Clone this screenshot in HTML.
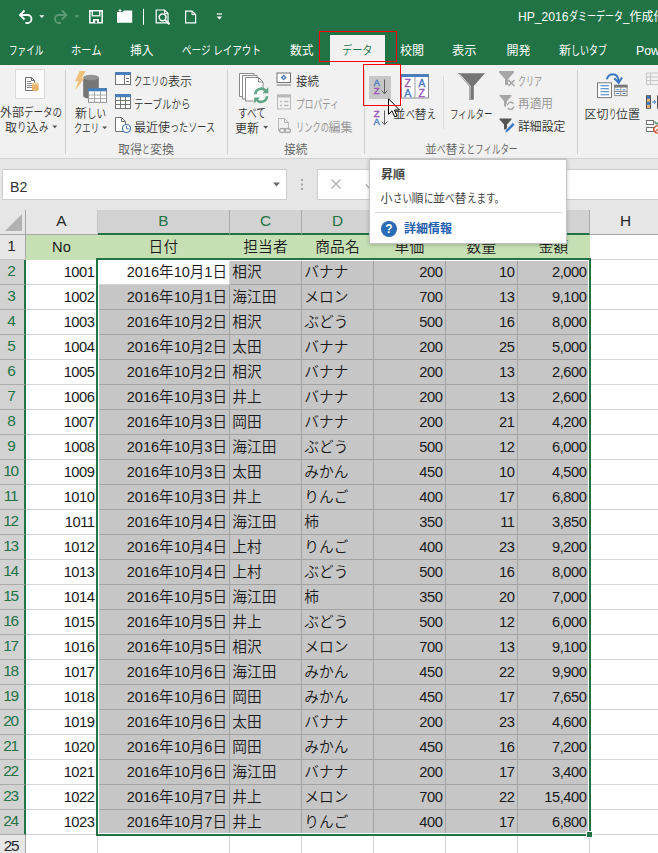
<!DOCTYPE html>
<html lang="ja"><head><meta charset="utf-8"><title>Excel</title>
<style>
*{box-sizing:border-box;margin:0;padding:0}
html,body{width:658px;height:853px;overflow:hidden;background:#fff}
body{position:relative;font-family:"Liberation Sans","Noto Sans CJK JP",sans-serif;font-size:12px;color:#262626}
.abs{position:absolute}
#top{position:absolute;left:0;top:0;width:658px;height:65px;background:#217346}
#ribbon{position:absolute;left:0;top:65px;width:658px;height:94px;background:#f1f1f1;border-bottom:1px solid #d2d2d2}
#fbar{position:absolute;left:0;top:159px;width:658px;height:51px;background:#e6e6e6}
.t{position:absolute;white-space:nowrap;line-height:16px;height:16px;transform-origin:0 50%}
.tw{color:#fff}
.g{color:#606060;font-weight:350}
.d{color:#979797}
.rb{color:#333;font-weight:350}
.vs{position:absolute;width:1px;background:#d0d0d0}
/* sheet */
#sheet{position:absolute;left:0;top:0;width:658px;height:853px;font-size:14.7px;font-weight:350}
.corner{position:absolute;left:0;top:210px;width:26px;height:25px;background:#e6e6e6;border-right:1px solid #a6a6a6;border-bottom:1px solid #a6a6a6}
.corner:after{content:"";position:absolute;right:3px;bottom:3px;border-style:solid;border-width:0 0 17px 17px;border-color:transparent transparent #b2b2b2 transparent}
.ch{position:absolute;top:210px;height:25px;background:#e6e6e6;border-right:1px solid #c6c6c6;border-bottom:1px solid #a6a6a6;text-align:center;line-height:22px;color:#262626;font-size:15.4px}
.ch.sel{background:#d2d2d2;color:#217346;border-right-color:#ababab;border-bottom:2px solid #217346}
.rh{position:absolute;left:0;width:26px;height:25px;background:#e6e6e6;border-right:1px solid #a6a6a6;border-bottom:1px solid #c6c6c6;text-align:center;line-height:22px;color:#262626;font-size:15.4px;padding-right:2px}
.rh.sel{background:#d2d2d2;color:#217346;border-bottom-color:#ababab;border-right:2px solid #217346;padding-right:1px}
.rh.n2{letter-spacing:-1.2px;padding-right:3px}
.c{position:absolute;height:25px;border-right:1px solid #d4d4d4;border-bottom:1px solid #d4d4d4;line-height:24px;white-space:nowrap;overflow:hidden;color:#1a1a1a;background:#fff}
.c.h1{background:#c6e0b4;border-color:#c6e0b4;text-align:center;letter-spacing:.2px}
.c.s{background:#c6c6c6;border-color:#a3a3a3}
.c.r{text-align:right;padding-right:2.5px}
.c.dt{font-size:14.55px;padding-right:2px}
.c.n{letter-spacing:-.45px}
.c.l{text-align:left;padding-left:2.3px}
</style></head><body>
<style>
.grn{color:#217346;font-weight:350}.tt{color:#444}.lnk{color:#1e5fb0}
</style><div id="sheet">
<div class="corner"></div>
<div class="ch" style="left:26px;width:72px">A</div>
<div class="ch sel" style="left:98px;width:132px">B</div>
<div class="ch sel" style="left:230px;width:72px">C</div>
<div class="ch sel" style="left:302px;width:72px">D</div>
<div class="ch sel" style="left:374px;width:72px">E</div>
<div class="ch sel" style="left:446px;width:72px">F</div>
<div class="ch sel" style="left:518px;width:72px">G</div>
<div class="ch" style="left:590px;width:72px">H</div>
<div class="rh" style="top:235px">1</div>
<div class="rh sel" style="top:260px">2</div>
<div class="rh sel" style="top:285px">3</div>
<div class="rh sel" style="top:310px">4</div>
<div class="rh sel" style="top:335px">5</div>
<div class="rh sel" style="top:360px">6</div>
<div class="rh sel" style="top:385px">7</div>
<div class="rh sel" style="top:410px">8</div>
<div class="rh sel" style="top:435px">9</div>
<div class="rh sel n2" style="top:460px">10</div>
<div class="rh sel n2" style="top:485px">11</div>
<div class="rh sel n2" style="top:510px">12</div>
<div class="rh sel n2" style="top:535px">13</div>
<div class="rh sel n2" style="top:560px">14</div>
<div class="rh sel n2" style="top:585px">15</div>
<div class="rh sel n2" style="top:610px">16</div>
<div class="rh sel n2" style="top:635px">17</div>
<div class="rh sel n2" style="top:660px">18</div>
<div class="rh sel n2" style="top:685px">19</div>
<div class="rh sel n2" style="top:710px">20</div>
<div class="rh sel n2" style="top:735px">21</div>
<div class="rh sel n2" style="top:760px">22</div>
<div class="rh sel n2" style="top:785px">23</div>
<div class="rh sel n2" style="top:810px">24</div>
<div class="rh n2" style="top:835px">25</div>
<div class="c h1" style="left:26px;top:235px;width:72px">No</div>
<div class="c h1" style="left:98px;top:235px;width:132px">日付</div>
<div class="c h1" style="left:230px;top:235px;width:72px">担当者</div>
<div class="c h1" style="left:302px;top:235px;width:72px">商品名</div>
<div class="c h1" style="left:374px;top:235px;width:72px">単価</div>
<div class="c h1" style="left:446px;top:235px;width:72px">数量</div>
<div class="c h1" style="left:518px;top:235px;width:72px">金額</div>
<div class="c" style="left:590px;top:235px;width:72px"></div>
<div class="c r n" style="left:26px;top:260px;width:72px">1001</div>
<div class="c r dt" style="left:98px;top:260px;width:132px">2016年10月1日</div>
<div class="c s l" style="left:230px;top:260px;width:72px">相沢</div>
<div class="c s l" style="left:302px;top:260px;width:72px">バナナ</div>
<div class="c s r n" style="left:374px;top:260px;width:72px">200</div>
<div class="c s r n" style="left:446px;top:260px;width:72px">10</div>
<div class="c s r n" style="left:518px;top:260px;width:72px">2,000</div>
<div class="c" style="left:590px;top:260px;width:72px"></div>
<div class="c r n" style="left:26px;top:285px;width:72px">1002</div>
<div class="c s r dt" style="left:98px;top:285px;width:132px">2016年10月1日</div>
<div class="c s l" style="left:230px;top:285px;width:72px">海江田</div>
<div class="c s l" style="left:302px;top:285px;width:72px">メロン</div>
<div class="c s r n" style="left:374px;top:285px;width:72px">700</div>
<div class="c s r n" style="left:446px;top:285px;width:72px">13</div>
<div class="c s r n" style="left:518px;top:285px;width:72px">9,100</div>
<div class="c" style="left:590px;top:285px;width:72px"></div>
<div class="c r n" style="left:26px;top:310px;width:72px">1003</div>
<div class="c s r dt" style="left:98px;top:310px;width:132px">2016年10月2日</div>
<div class="c s l" style="left:230px;top:310px;width:72px">相沢</div>
<div class="c s l" style="left:302px;top:310px;width:72px">ぶどう</div>
<div class="c s r n" style="left:374px;top:310px;width:72px">500</div>
<div class="c s r n" style="left:446px;top:310px;width:72px">16</div>
<div class="c s r n" style="left:518px;top:310px;width:72px">8,000</div>
<div class="c" style="left:590px;top:310px;width:72px"></div>
<div class="c r n" style="left:26px;top:335px;width:72px">1004</div>
<div class="c s r dt" style="left:98px;top:335px;width:132px">2016年10月2日</div>
<div class="c s l" style="left:230px;top:335px;width:72px">太田</div>
<div class="c s l" style="left:302px;top:335px;width:72px">バナナ</div>
<div class="c s r n" style="left:374px;top:335px;width:72px">200</div>
<div class="c s r n" style="left:446px;top:335px;width:72px">25</div>
<div class="c s r n" style="left:518px;top:335px;width:72px">5,000</div>
<div class="c" style="left:590px;top:335px;width:72px"></div>
<div class="c r n" style="left:26px;top:360px;width:72px">1005</div>
<div class="c s r dt" style="left:98px;top:360px;width:132px">2016年10月2日</div>
<div class="c s l" style="left:230px;top:360px;width:72px">相沢</div>
<div class="c s l" style="left:302px;top:360px;width:72px">バナナ</div>
<div class="c s r n" style="left:374px;top:360px;width:72px">200</div>
<div class="c s r n" style="left:446px;top:360px;width:72px">13</div>
<div class="c s r n" style="left:518px;top:360px;width:72px">2,600</div>
<div class="c" style="left:590px;top:360px;width:72px"></div>
<div class="c r n" style="left:26px;top:385px;width:72px">1006</div>
<div class="c s r dt" style="left:98px;top:385px;width:132px">2016年10月3日</div>
<div class="c s l" style="left:230px;top:385px;width:72px">井上</div>
<div class="c s l" style="left:302px;top:385px;width:72px">バナナ</div>
<div class="c s r n" style="left:374px;top:385px;width:72px">200</div>
<div class="c s r n" style="left:446px;top:385px;width:72px">13</div>
<div class="c s r n" style="left:518px;top:385px;width:72px">2,600</div>
<div class="c" style="left:590px;top:385px;width:72px"></div>
<div class="c r n" style="left:26px;top:410px;width:72px">1007</div>
<div class="c s r dt" style="left:98px;top:410px;width:132px">2016年10月3日</div>
<div class="c s l" style="left:230px;top:410px;width:72px">岡田</div>
<div class="c s l" style="left:302px;top:410px;width:72px">バナナ</div>
<div class="c s r n" style="left:374px;top:410px;width:72px">200</div>
<div class="c s r n" style="left:446px;top:410px;width:72px">21</div>
<div class="c s r n" style="left:518px;top:410px;width:72px">4,200</div>
<div class="c" style="left:590px;top:410px;width:72px"></div>
<div class="c r n" style="left:26px;top:435px;width:72px">1008</div>
<div class="c s r dt" style="left:98px;top:435px;width:132px">2016年10月3日</div>
<div class="c s l" style="left:230px;top:435px;width:72px">海江田</div>
<div class="c s l" style="left:302px;top:435px;width:72px">ぶどう</div>
<div class="c s r n" style="left:374px;top:435px;width:72px">500</div>
<div class="c s r n" style="left:446px;top:435px;width:72px">12</div>
<div class="c s r n" style="left:518px;top:435px;width:72px">6,000</div>
<div class="c" style="left:590px;top:435px;width:72px"></div>
<div class="c r n" style="left:26px;top:460px;width:72px">1009</div>
<div class="c s r dt" style="left:98px;top:460px;width:132px">2016年10月3日</div>
<div class="c s l" style="left:230px;top:460px;width:72px">太田</div>
<div class="c s l" style="left:302px;top:460px;width:72px">みかん</div>
<div class="c s r n" style="left:374px;top:460px;width:72px">450</div>
<div class="c s r n" style="left:446px;top:460px;width:72px">10</div>
<div class="c s r n" style="left:518px;top:460px;width:72px">4,500</div>
<div class="c" style="left:590px;top:460px;width:72px"></div>
<div class="c r n" style="left:26px;top:485px;width:72px">1010</div>
<div class="c s r dt" style="left:98px;top:485px;width:132px">2016年10月3日</div>
<div class="c s l" style="left:230px;top:485px;width:72px">井上</div>
<div class="c s l" style="left:302px;top:485px;width:72px">りんご</div>
<div class="c s r n" style="left:374px;top:485px;width:72px">400</div>
<div class="c s r n" style="left:446px;top:485px;width:72px">17</div>
<div class="c s r n" style="left:518px;top:485px;width:72px">6,800</div>
<div class="c" style="left:590px;top:485px;width:72px"></div>
<div class="c r n" style="left:26px;top:510px;width:72px">1011</div>
<div class="c s r dt" style="left:98px;top:510px;width:132px">2016年10月4日</div>
<div class="c s l" style="left:230px;top:510px;width:72px">海江田</div>
<div class="c s l" style="left:302px;top:510px;width:72px">柿</div>
<div class="c s r n" style="left:374px;top:510px;width:72px">350</div>
<div class="c s r n" style="left:446px;top:510px;width:72px">11</div>
<div class="c s r n" style="left:518px;top:510px;width:72px">3,850</div>
<div class="c" style="left:590px;top:510px;width:72px"></div>
<div class="c r n" style="left:26px;top:535px;width:72px">1012</div>
<div class="c s r dt" style="left:98px;top:535px;width:132px">2016年10月4日</div>
<div class="c s l" style="left:230px;top:535px;width:72px">上村</div>
<div class="c s l" style="left:302px;top:535px;width:72px">りんご</div>
<div class="c s r n" style="left:374px;top:535px;width:72px">400</div>
<div class="c s r n" style="left:446px;top:535px;width:72px">23</div>
<div class="c s r n" style="left:518px;top:535px;width:72px">9,200</div>
<div class="c" style="left:590px;top:535px;width:72px"></div>
<div class="c r n" style="left:26px;top:560px;width:72px">1013</div>
<div class="c s r dt" style="left:98px;top:560px;width:132px">2016年10月4日</div>
<div class="c s l" style="left:230px;top:560px;width:72px">上村</div>
<div class="c s l" style="left:302px;top:560px;width:72px">ぶどう</div>
<div class="c s r n" style="left:374px;top:560px;width:72px">500</div>
<div class="c s r n" style="left:446px;top:560px;width:72px">16</div>
<div class="c s r n" style="left:518px;top:560px;width:72px">8,000</div>
<div class="c" style="left:590px;top:560px;width:72px"></div>
<div class="c r n" style="left:26px;top:585px;width:72px">1014</div>
<div class="c s r dt" style="left:98px;top:585px;width:132px">2016年10月5日</div>
<div class="c s l" style="left:230px;top:585px;width:72px">海江田</div>
<div class="c s l" style="left:302px;top:585px;width:72px">柿</div>
<div class="c s r n" style="left:374px;top:585px;width:72px">350</div>
<div class="c s r n" style="left:446px;top:585px;width:72px">20</div>
<div class="c s r n" style="left:518px;top:585px;width:72px">7,000</div>
<div class="c" style="left:590px;top:585px;width:72px"></div>
<div class="c r n" style="left:26px;top:610px;width:72px">1015</div>
<div class="c s r dt" style="left:98px;top:610px;width:132px">2016年10月5日</div>
<div class="c s l" style="left:230px;top:610px;width:72px">井上</div>
<div class="c s l" style="left:302px;top:610px;width:72px">ぶどう</div>
<div class="c s r n" style="left:374px;top:610px;width:72px">500</div>
<div class="c s r n" style="left:446px;top:610px;width:72px">12</div>
<div class="c s r n" style="left:518px;top:610px;width:72px">6,000</div>
<div class="c" style="left:590px;top:610px;width:72px"></div>
<div class="c r n" style="left:26px;top:635px;width:72px">1016</div>
<div class="c s r dt" style="left:98px;top:635px;width:132px">2016年10月5日</div>
<div class="c s l" style="left:230px;top:635px;width:72px">相沢</div>
<div class="c s l" style="left:302px;top:635px;width:72px">メロン</div>
<div class="c s r n" style="left:374px;top:635px;width:72px">700</div>
<div class="c s r n" style="left:446px;top:635px;width:72px">13</div>
<div class="c s r n" style="left:518px;top:635px;width:72px">9,100</div>
<div class="c" style="left:590px;top:635px;width:72px"></div>
<div class="c r n" style="left:26px;top:660px;width:72px">1017</div>
<div class="c s r dt" style="left:98px;top:660px;width:132px">2016年10月6日</div>
<div class="c s l" style="left:230px;top:660px;width:72px">海江田</div>
<div class="c s l" style="left:302px;top:660px;width:72px">みかん</div>
<div class="c s r n" style="left:374px;top:660px;width:72px">450</div>
<div class="c s r n" style="left:446px;top:660px;width:72px">22</div>
<div class="c s r n" style="left:518px;top:660px;width:72px">9,900</div>
<div class="c" style="left:590px;top:660px;width:72px"></div>
<div class="c r n" style="left:26px;top:685px;width:72px">1018</div>
<div class="c s r dt" style="left:98px;top:685px;width:132px">2016年10月6日</div>
<div class="c s l" style="left:230px;top:685px;width:72px">岡田</div>
<div class="c s l" style="left:302px;top:685px;width:72px">みかん</div>
<div class="c s r n" style="left:374px;top:685px;width:72px">450</div>
<div class="c s r n" style="left:446px;top:685px;width:72px">17</div>
<div class="c s r n" style="left:518px;top:685px;width:72px">7,650</div>
<div class="c" style="left:590px;top:685px;width:72px"></div>
<div class="c r n" style="left:26px;top:710px;width:72px">1019</div>
<div class="c s r dt" style="left:98px;top:710px;width:132px">2016年10月6日</div>
<div class="c s l" style="left:230px;top:710px;width:72px">太田</div>
<div class="c s l" style="left:302px;top:710px;width:72px">バナナ</div>
<div class="c s r n" style="left:374px;top:710px;width:72px">200</div>
<div class="c s r n" style="left:446px;top:710px;width:72px">23</div>
<div class="c s r n" style="left:518px;top:710px;width:72px">4,600</div>
<div class="c" style="left:590px;top:710px;width:72px"></div>
<div class="c r n" style="left:26px;top:735px;width:72px">1020</div>
<div class="c s r dt" style="left:98px;top:735px;width:132px">2016年10月6日</div>
<div class="c s l" style="left:230px;top:735px;width:72px">岡田</div>
<div class="c s l" style="left:302px;top:735px;width:72px">みかん</div>
<div class="c s r n" style="left:374px;top:735px;width:72px">450</div>
<div class="c s r n" style="left:446px;top:735px;width:72px">16</div>
<div class="c s r n" style="left:518px;top:735px;width:72px">7,200</div>
<div class="c" style="left:590px;top:735px;width:72px"></div>
<div class="c r n" style="left:26px;top:760px;width:72px">1021</div>
<div class="c s r dt" style="left:98px;top:760px;width:132px">2016年10月6日</div>
<div class="c s l" style="left:230px;top:760px;width:72px">海江田</div>
<div class="c s l" style="left:302px;top:760px;width:72px">バナナ</div>
<div class="c s r n" style="left:374px;top:760px;width:72px">200</div>
<div class="c s r n" style="left:446px;top:760px;width:72px">17</div>
<div class="c s r n" style="left:518px;top:760px;width:72px">3,400</div>
<div class="c" style="left:590px;top:760px;width:72px"></div>
<div class="c r n" style="left:26px;top:785px;width:72px">1022</div>
<div class="c s r dt" style="left:98px;top:785px;width:132px">2016年10月7日</div>
<div class="c s l" style="left:230px;top:785px;width:72px">井上</div>
<div class="c s l" style="left:302px;top:785px;width:72px">メロン</div>
<div class="c s r n" style="left:374px;top:785px;width:72px">700</div>
<div class="c s r n" style="left:446px;top:785px;width:72px">22</div>
<div class="c s r n" style="left:518px;top:785px;width:72px">15,400</div>
<div class="c" style="left:590px;top:785px;width:72px"></div>
<div class="c r n" style="left:26px;top:810px;width:72px">1023</div>
<div class="c s r dt" style="left:98px;top:810px;width:132px">2016年10月7日</div>
<div class="c s l" style="left:230px;top:810px;width:72px">井上</div>
<div class="c s l" style="left:302px;top:810px;width:72px">りんご</div>
<div class="c s r n" style="left:374px;top:810px;width:72px">400</div>
<div class="c s r n" style="left:446px;top:810px;width:72px">17</div>
<div class="c s r n" style="left:518px;top:810px;width:72px">6,800</div>
<div class="c" style="left:590px;top:810px;width:72px"></div>
<div class="c" style="left:26px;top:835px;width:72px"></div>
<div class="c" style="left:98px;top:835px;width:132px"></div>
<div class="c" style="left:230px;top:835px;width:72px"></div>
<div class="c" style="left:302px;top:835px;width:72px"></div>
<div class="c" style="left:374px;top:835px;width:72px"></div>
<div class="c" style="left:446px;top:835px;width:72px"></div>
<div class="c" style="left:518px;top:835px;width:72px"></div>
<div class="c" style="left:590px;top:835px;width:72px"></div>
</div>
<div id="top"></div>
<div id="ribbon"></div>
<div id="fbar"></div>
<!-- active tab -->
<div class="abs" style="left:330px;top:35px;width:55px;height:31px;background:#f1f1f1"></div>

<!-- title bar icons -->
<svg class="abs" style="left:0;top:0" width="240" height="34" viewBox="0 0 240 34" fill="none">
 <!-- undo -->
 <path d="M24.5 10.5 L20 15 L24.5 19.5" stroke="#fff" stroke-width="1.8" fill="none"/>
 <path d="M20.5 15 H27.5 A4 4 0 0 1 27.5 23 H25.5" stroke="#fff" stroke-width="1.8" fill="none"/>
 <path d="M39.3 15.3 h5 l-2.5 2.6z" fill="#fff"/>
 <!-- redo faded -->
 <path d="M62 10.5 L66.5 15 L62 19.5" stroke="#5c9a78" stroke-width="1.8" fill="none"/>
 <path d="M66 15 H59 A4 4 0 0 0 59 23 H61" stroke="#5c9a78" stroke-width="1.8" fill="none"/>
 <path d="M74.3 15.3 h5 l-2.5 2.6z" fill="#5c9a78"/>
 <!-- save -->
 <path d="M89.8 10.8 H102.2 V22.7 H89.8 Z" stroke="#fff" stroke-width="1.6"/>
 <rect x="92.3" y="10.8" width="7.4" height="5" fill="#217346" stroke="#fff" stroke-width="1.3"/>
 <rect x="93" y="19" width="6" height="4" fill="#fff"/>
 <rect x="95.2" y="20.5" width="1.8" height="2.5" fill="#217346"/>
 <!-- folder -->
 <path d="M117 12 h5.5 l1.5 -1.6 h8.2 V22.8 H117 Z" fill="#fff"/>
 <path d="M118.5 10.6 h3 M120 9 v3" stroke="#fff" stroke-width="1"/>
 <!-- sep -->
 <rect x="143" y="8.8" width="1" height="16" fill="#fff"/>
 <!-- print preview -->
 <path d="M156.2 10 H164.5 L168 13.5 V22.8 H156.2 Z" stroke="#fff" stroke-width="1.2"/>
 <path d="M164.5 10 V13.5 H168" stroke="#fff" stroke-width="1"/>
 <circle cx="162.6" cy="17.3" r="3.4" stroke="#fff" stroke-width="1.5" fill="#217346"/>
 <path d="M165 20 L169.5 24.3" stroke="#fff" stroke-width="2"/>
 <!-- new doc -->
 <path d="M185.6 11.2 H192 L195.6 14.6 V22.9 H185.6 Z" stroke="#fff" stroke-width="1.2"/>
 <path d="M192 11.2 V14.6 H195.6" stroke="#fff" stroke-width="1"/>
 <!-- customize -->
 <rect x="216.8" y="13.4" width="5.2" height="1.2" fill="#fff"/>
 <path d="M216.6 16.4 h5.6 l-2.8 3.2z" fill="#fff"/>
</svg>

<!-- ribbon separators -->
<div class="vs" style="left:65px;top:70px;height:84px"></div>
<div class="vs" style="left:227px;top:70px;height:84px"></div>
<div class="vs" style="left:364px;top:70px;height:84px"></div>
<div class="vs" style="left:443px;top:76px;height:53px;background:#dcdcdc"></div>
<div class="vs" style="left:577px;top:70px;height:84px"></div>

<!-- external data big button -->
<div class="abs" style="left:15px;top:69px;width:30px;height:30px;background:#fbfbfb;border:1px solid #dadada"></div>
<svg class="abs" style="left:15px;top:69px" width="30" height="30" viewBox="0 0 30 30" fill="none">
 <path d="M10.5 8.5 H16.5 L19.5 11.5 V21.5 H10.5 Z" fill="#fff" stroke="#6e6e6e" stroke-width="1"/>
 <path d="M16.5 8.5 V11.5 H19.5" stroke="#6e6e6e" stroke-width="1"/>
 <path d="M12 12.5h4M12 14.5h5M12 16.5h5M12 18.5h5" stroke="#8a8a8a" stroke-width="1"/>
 <path d="M17 14.8 v6 a3.3 1.4 0 0 0 6.6 0 v-6 z" fill="#e8b36a"/>
 <ellipse cx="20.3" cy="14.8" rx="3.3" ry="1.4" fill="#f3cf98"/>
</svg>
<!-- dropdown arrows -->
<svg class="abs" style="left:0;top:64px" width="658" height="94" viewBox="0 64 658 94">
 <path d="M52.300 125.400 h5 l-2.500 2.800z" fill="#555"/>
 <path d="M102.200 126.500 h5 l-2.500 2.800z" fill="#555"/>
 <path d="M263.200 126 h5 l-2.500 2.800z" fill="#555"/>
</svg>

<!-- new query icon -->
<svg class="abs" style="left:74px;top:69px" width="36" height="36" viewBox="74 69 36 36" fill="none">
 <path d="M83.200 77.500 v18.500 a7.800 2.800 0 0 0 15.600 0 v-18.500 z" fill="#757575"/>
 <ellipse cx="91" cy="77.500" rx="7.800" ry="2.800" fill="#949494"/>
 <path d="M79.600 71 h6 l-3.800 7.300 h2.600 l-8.900 11.600 l2.700 -8.600 h-3.100 z" fill="#efc079"/>
 <rect x="88.500" y="88.500" width="18" height="13.800" fill="#fff" stroke="#8f8f8f" stroke-width="1"/>
 <rect x="88" y="88" width="19" height="3.300" fill="#4a7ebb"/>
 <path d="M88.500 95 h18 M88.500 98.600 h18 M94.500 91.500 v10.500 M100.500 91.500 v10.500" stroke="#a0a0a0" stroke-width=".9"/>
</svg>

<!-- small icons group1 -->
<svg class="abs" style="left:114px;top:70px" width="20" height="66" viewBox="114 70 20 66" fill="none">
 <!-- show queries -->
 <rect x="115.5" y="72.5" width="15" height="12" fill="#fff" stroke="#737373"/>
 <rect x="115" y="72" width="16" height="3" fill="#4a7ebb"/>
 <path d="M124.5 75 v9.5" stroke="#737373"/>
 <path d="M126 78.5h3M126 81.5h3" stroke="#737373"/>
 <!-- from table -->
 <rect x="115.5" y="94.5" width="15" height="14" fill="#fff" stroke="#737373"/>
 <rect x="115" y="94" width="16" height="3.2" fill="#4a7ebb"/>
 <path d="M115.5 100.5h15M115.5 104.5h15M120.5 97v11.5M125.5 97v11.5" stroke="#737373"/>
 <!-- recent sources -->
 <path d="M115.5 117.5 H121.5 L125.5 121.5 V131.5 H115.5 Z" fill="#fff" stroke="#737373"/>
 <path d="M121.5 117.5 V121.5 H125.5" stroke="#737373"/>
 <circle cx="126.5" cy="128.5" r="4" fill="#fff" stroke="#3f73b7" stroke-width="1.2"/>
 <path d="M126.5 126 v2.8 h2.3" stroke="#3f73b7" stroke-width="1"/>
</svg>

<!-- refresh all icon -->
<svg class="abs" style="left:236px;top:70px" width="36" height="36" viewBox="236 70 36 36" fill="none">
 <path d="M239.500 73.500 h14.500 v23 h-14.500z" fill="#fff" stroke="#8a8a8a"/>
 <path d="M242.500 75.500 h14.500 v23.500 h-14.500z" fill="#fff" stroke="#8a8a8a"/>
 <path d="M245.500 77.500 H258.500 L263 82 V101 H245.500 Z" fill="#fff"/>
 <path d="M253.500 101 H245.500 V77.500 H258.500 L263 82 V88" stroke="#8a8a8a"/>
 <path d="M258.500 77.500 V82 H263" stroke="#8a8a8a"/>
 <path d="M255.400 94.300 a5.800 5.800 0 0 1 10.300 -3.400" stroke="#62a688" stroke-width="2.600"/>
 <path d="M268.300 87.200 v6 h-6z" fill="#62a688"/>
 <path d="M267 96.300 a5.800 5.800 0 0 1 -10.300 3.400" stroke="#62a688" stroke-width="2.600"/>
 <path d="M254.100 103.400 v-6 h6z" fill="#62a688"/>
</svg>

<!-- small icons group2 -->
<svg class="abs" style="left:275px;top:70px" width="20" height="66" viewBox="275 70 20 66" fill="none">
 <!-- connections -->
 <rect x="277" y="73" width="13.500" height="9.500" fill="#fff" stroke="#737373"/>
 <path d="M276.500 85 h14.500" stroke="#737373"/>
 <path d="M283.700 74.600 l3 3 l-3 3 l-3 -3z" fill="#4a7ebb"/>
 <rect x="282.900" y="76.800" width="1.600" height="1.600" fill="#fff"/>
 <!-- properties -->
 <rect x="277.500" y="95" width="13" height="14" fill="#f1f1f1" stroke="#b9b9b9"/>
 <rect x="277" y="94.500" width="14" height="3" fill="#b9b9b9"/>
 <path d="M280 101.500h2M284 101.500h4.500M280 105.500h2M284 105.500h4.500" stroke="#b9b9b9" stroke-width="1.300"/>
 <!-- edit links -->
 <path d="M278.500 118.500 H284.500 L288.500 122.500 V128 M278.500 118.500 V131" stroke="#b9b9b9"/>
 <path d="M284.500 118.500 V122.500 H288.500" stroke="#b9b9b9"/>
 <ellipse cx="282.500" cy="130.500" rx="3" ry="2" stroke="#a9a9a9" stroke-width="1.300"/>
 <ellipse cx="287.500" cy="130.500" rx="3" ry="2" stroke="#a9a9a9" stroke-width="1.300"/>
</svg>

<!-- sort buttons -->
<div class="abs" style="left:369px;top:76px;width:22px;height:23px;background:#c6c6c6"></div>
<svg class="abs" style="left:366px;top:70px" width="70" height="60" viewBox="366 70 70 60" fill="none">
 <text x="373.400" y="85.800" font-family="Liberation Sans,sans-serif" font-size="9.600" fill="#4a7cc4" stroke="#4a7cc4" stroke-width=".35">A</text>
 <text x="373.800" y="94.400" font-family="Liberation Sans,sans-serif" font-size="9.600" fill="#9a55b8" stroke="#9a55b8" stroke-width=".35">Z</text>
 <path d="M384.500 79.500 V93.500 M381.700 90.500 L384.500 93.800 L387.300 90.500" stroke="#606060" stroke-width="1"/>
 <text x="373.800" y="116.800" font-family="Liberation Sans,sans-serif" font-size="9.600" fill="#9a55b8" stroke="#9a55b8" stroke-width=".35">Z</text>
 <text x="373.400" y="125.200" font-family="Liberation Sans,sans-serif" font-size="9.600" fill="#4a7cc4" stroke="#4a7cc4" stroke-width=".35">A</text>
 <path d="M384.500 110.500 V124.500 M381.700 121.500 L384.500 124.800 L387.300 121.500" stroke="#606060" stroke-width="1"/>
 <!-- big sort -->
 <rect x="401.500" y="74.500" width="27" height="23.500" fill="#fff" stroke="#8c8c8c"/>
 <rect x="401" y="74" width="28" height="3" fill="#4a7ebb"/>
 <path d="M415 77 V98" stroke="#9c9c9c"/>
 <text x="404.500" y="86.500" font-family="Liberation Sans,sans-serif" font-size="10.500" fill="#9a55b8" stroke="#9a55b8" stroke-width=".4">Z</text>
 <text x="404.200" y="96.500" font-family="Liberation Sans,sans-serif" font-size="10.500" fill="#4a7cc4" stroke="#4a7cc4" stroke-width=".4">A</text>
 <text x="418.200" y="86.500" font-family="Liberation Sans,sans-serif" font-size="10.500" fill="#4a7cc4" stroke="#4a7cc4" stroke-width=".4">A</text>
 <text x="418.500" y="96.500" font-family="Liberation Sans,sans-serif" font-size="10.500" fill="#9a55b8" stroke="#9a55b8" stroke-width=".4">Z</text>
</svg>

<!-- filter icon -->
<svg class="abs" style="left:456px;top:70px" width="32" height="32" viewBox="456 70 32 32">
 <path d="M458 73.300 H485 L473.800 86 V99.800 H469 V86 Z" fill="#757575"/>
 <path d="M459.800 74.300 L470 85.800 V99" stroke="#fff" stroke-width=".8" fill="none"/>
</svg>

<!-- small filter icons -->
<svg class="abs" style="left:498px;top:68px" width="20" height="68" viewBox="498 68 20 68" fill="none">
 <path d="M499 71 H514 V72.500 L508.200 79 V85 H505 V79 L499 72.500 Z" fill="#a6a6a6"/>
 <path d="M508.500 80 l6 6 M514.500 80 l-6 6" stroke="#a6a6a6" stroke-width="1.600"/>
 <path d="M499.500 95 H511.500 V96 L507 101 V106.500 H504 V101 L499.500 96 Z" fill="#a6a6a6"/>
 <circle cx="510.600" cy="105.800" r="4.600" fill="#f1f1f1"/><path d="M507.300 105.300 a3.400 3.400 0 0 1 6.200 -1.500 M513.900 106.300 a3.400 3.400 0 0 1 -6.200 1.500" stroke="#a6a6a6" stroke-width="1.400"/>
 <path d="M499.500 118.500 H511.500 V119.500 L507 124.500 V129.500 H504 V124.500 L499.500 119.500 Z" fill="#555"/>
 <path d="M512.800 122.500 l2.200 2.200 l-7.300 7.300 l-3 .9 l.9 -3z" fill="#3b78c4" stroke="#f1f1f1" stroke-width=".8"/>
</svg>

<!-- text to columns -->
<svg class="abs" style="left:595px;top:70px" width="36" height="30" viewBox="595 70 36 30" fill="none">
 <rect x="597.500" y="82.800" width="14" height="14.800" fill="#fff" stroke="#7a7a7a"/>
 <path d="M600.500 85.800h8.500M600.500 88.800h8.500M600.500 91.800h8.500M600.500 94.800h8.500" stroke="#3b78c4" stroke-width="1.100"/>
 <rect x="614.700" y="85.300" width="12.300" height="10.300" fill="#fff" stroke="#8a8a8a"/>
 <rect x="614.200" y="84.800" width="13.300" height="2.800" fill="#777"/>
 <path d="M614.700 91.500h12.300M620.800 87.500v8" stroke="#8a8a8a"/>
 <path d="M616.300 89.700h3M622.500 89.700h3M616.300 93.500h3M622.500 93.500h3" stroke="#3b78c4" stroke-width="1.100"/>
 <path d="M606.800 79.200 C608.500 73.500 617.800 71 618.600 81.500" stroke="#3b78c4" stroke-width="2"/>
 <path d="M614.300 78.200 L618.700 82.800 L622 77.400" stroke="#3b78c4" stroke-width="2"/>
</svg>
<!-- right cut icons -->
<svg class="abs" style="left:644px;top:68px" width="14" height="68" viewBox="644 68 14 68" fill="none">
 <path d="M646.500 73h12M646.500 73v11.500M650.500 73v11.500M646.500 77h12M646.500 80.500h12M646.500 84.500h12" stroke="#c8c8c8" stroke-width="1.200"/>
 <rect x="646.500" y="95.700" width="4" height="12.500" fill="#3b78c4" stroke="#555"/>
 <rect x="647" y="98.800" width="3" height="3" fill="#e8b36a"/>
 <rect x="647" y="104.800" width="3" height="3" fill="#e8b36a"/>
 <path d="M652 102h3.500 M654 100.300l1.800 1.700l-1.800 1.700" stroke="#3b78c4"/>
 <rect x="657" y="95.200" width="3" height="13.500" fill="#555"/>
 <rect x="646.500" y="120.500" width="7" height="4" fill="#fff" stroke="#737373"/>
 <rect x="646.500" y="127.500" width="7" height="4" fill="#fff" stroke="#737373"/>
 <path d="M654.500 121.500 l2 2.500 l3 -2.500" stroke="#4f9a6f" stroke-width="1.400"/>
 <circle cx="657.500" cy="129.500" r="3.600" stroke="#d8572a" stroke-width="1.300" fill="#f1f1f1"/>
 <path d="M655.200 131.800 l4.600 -4.600" stroke="#d8572a" stroke-width="1.200"/>
</svg>

<!-- formula bar -->
<div class="abs" style="left:2px;top:169px;width:285px;height:31px;background:#fff;border:1px solid #cdcdcd"></div>
<svg class="abs" style="left:270px;top:178px" width="14" height="12" viewBox="0 0 14 12"><path d="M3 4.500 h7 l-3.500 4z" fill="#6a6a6a"/></svg>
<div class="abs" style="left:301px;top:178.500px;width:2px;height:2px;background:#a3a3a3;box-shadow:0 4.500px 0 #a3a3a3,0 9px 0 #a3a3a3"></div>
<div class="abs" style="left:317px;top:169px;width:345px;height:31px;background:#fff;border:1px solid #cdcdcd"></div>
<svg class="abs" style="left:328px;top:176px" width="52" height="16" viewBox="0 0 52 16" fill="none">
 <path d="M3.500 3.500 l9 9 M12.500 3.500 l-9 9" stroke="#b0b0b0" stroke-width="1.300"/>
 <path d="M38 8.500 l3.500 4 l7 -9" stroke="#b0b0b0" stroke-width="1.300"/>
</svg>

<!-- selection borders -->
<div class="abs" style="left:96px;top:258px;width:495px;height:578px;border:2px solid #217346"></div>
<div class="abs" style="left:98px;top:260px;width:491px;height:574px;border:1px solid #fff"></div>
<div class="abs" style="left:586px;top:831px;width:7px;height:7px;background:#217346;border:1px solid #fff"></div>
<!-- tooltip -->
<div class="abs" style="left:369px;top:159px;width:198px;height:85px;background:#fff;border:1px solid #c4c4c4;box-shadow:0 1px 4px rgba(0,0,0,.22)"></div>
<div class="abs" style="left:375px;top:212px;width:187px;height:1px;background:#dadada"></div>
<svg class="abs" style="left:379.500px;top:220px" width="18" height="18" viewBox="0 0 18 18">
 <circle cx="9" cy="9" r="8" fill="#2a6bb5"/>
 <text x="9" y="13.300" text-anchor="middle" font-family="Liberation Sans,sans-serif" font-size="12" font-weight="bold" fill="#fff">?</text>
</svg>

<div class="t tw" style="left:517.50px;top:8.5px;font-size:12px;transform:scaleX(1.0091);">HP_2016</div>
<div class="t tw" style="left:568.50px;top:8.5px;font-size:12px;transform:scaleX(0.7498);">ダミーデータ</div>
<div class="t tw" style="left:623.00px;top:8.5px;font-size:12px;transform:scaleX(0.9696);">_</div>
<div class="t tw" style="left:629.48px;top:8.5px;font-size:12px;">作成他</div>
<div class="t tw" style="left:9.00px;top:42.5px;font-size:12px;transform:scaleX(0.7185);">ファイル</div>
<div class="t tw" style="left:71.00px;top:42.5px;font-size:12px;transform:scaleX(0.8558);">ホーム</div>
<div class="t tw" style="left:130.00px;top:42.5px;font-size:12px;transform:scaleX(0.9785);">挿入</div>
<div class="t tw" style="left:182.00px;top:42.5px;font-size:12px;transform:scaleX(0.7971);">ページ レイアウト</div>
<div class="t tw" style="left:290.00px;top:42.5px;font-size:12px;transform:scaleX(0.9785);">数式</div>
<div class="t grn" style="left:342.00px;top:42.5px;font-size:12px;transform:scaleX(0.8469);">データ</div>
<div class="t tw" style="left:400.00px;top:42.5px;font-size:12px;">校閲</div>
<div class="t tw" style="left:452.00px;top:42.5px;font-size:12px;transform:scaleX(1.0202);">表示</div>
<div class="t tw" style="left:506.50px;top:42.5px;font-size:12px;">開発</div>
<div class="t tw" style="left:559.00px;top:42.5px;font-size:12px;">新</div>
<div class="t tw" style="left:571.02px;top:42.5px;font-size:12px;transform:scaleX(0.7494);">しいタブ</div>
<div class="t tw" style="left:636.00px;top:42.5px;font-size:12px;transform:scaleX(1.0281);">Pow</div>
<div class="t rb" style="left:0.00px;top:105px;font-size:12px;">外部</div>
<div class="t rb" style="left:24.02px;top:105px;font-size:12px;transform:scaleX(0.7911);">データの</div>
<div class="t rb" style="left:5.00px;top:120px;font-size:12px;">取</div>
<div class="t rb" style="left:17.02px;top:120px;font-size:12px;transform:scaleX(0.7893);">り</div>
<div class="t rb" style="left:26.50px;top:120px;font-size:12px;">込</div>
<div class="t rb" style="left:38.52px;top:120px;font-size:12px;transform:scaleX(0.7893);">み</div>
<div class="t rb" style="left:75.00px;top:106px;font-size:12px;">新</div>
<div class="t rb" style="left:87.02px;top:106px;font-size:12px;transform:scaleX(0.7905);">しい</div>
<div class="t rb" style="left:74.00px;top:121px;font-size:12px;transform:scaleX(0.6941);">クエリ</div>
<div class="t rb" style="left:134.00px;top:73.5px;font-size:12px;transform:scaleX(0.7078);">クエリの</div>
<div class="t rb" style="left:167.98px;top:73.5px;font-size:12px;">表示</div>
<div class="t rb" style="left:134.00px;top:96.5px;font-size:12px;transform:scaleX(0.7926);">テーブルから</div>
<div class="t rb" style="left:134.00px;top:119.5px;font-size:12px;">最近使</div>
<div class="t rb" style="left:170.02px;top:119.5px;font-size:12px;transform:scaleX(0.7572);">ったソース</div>
<div class="t g" style="left:118.00px;top:142px;font-size:12px;">取得</div>
<div class="t g" style="left:142.02px;top:142px;font-size:12px;transform:scaleX(0.6632);">と</div>
<div class="t g" style="left:149.98px;top:142px;font-size:12px;">変換</div>
<div class="t rb" style="left:237.80px;top:106px;font-size:12px;transform:scaleX(0.8072);">すべて</div>
<div class="t rb" style="left:235.00px;top:121px;font-size:12px;">更新</div>
<div class="t rb" style="left:295.50px;top:73.5px;font-size:12px;transform:scaleX(0.9577);">接続</div>
<div class="t d" style="left:295.50px;top:96.5px;font-size:12px;transform:scaleX(0.7254);">プロパティ</div>
<div class="t d" style="left:295.50px;top:119.5px;font-size:12px;transform:scaleX(0.6870);">リンクの</div>
<div class="t d" style="left:328.48px;top:119.5px;font-size:12px;">編集</div>
<div class="t g" style="left:283.50px;top:142px;font-size:12px;transform:scaleX(0.9785);">接続</div>
<div class="t rb" style="left:393.50px;top:107px;font-size:12px;">並</div>
<div class="t rb" style="left:405.52px;top:107px;font-size:12px;transform:scaleX(0.7477);">べ</div>
<div class="t rb" style="left:414.50px;top:107px;font-size:12px;">替</div>
<div class="t rb" style="left:426.52px;top:107px;font-size:12px;transform:scaleX(0.7477);">え</div>
<div class="t rb" style="left:450.00px;top:107px;font-size:12px;transform:scaleX(0.7111);">フィルター</div>
<div class="t d" style="left:517.50px;top:73.5px;font-size:12px;transform:scaleX(0.6664);">クリア</div>
<div class="t d" style="left:517.50px;top:95.7px;font-size:12px;transform:scaleX(0.9718);">再適用</div>
<div class="t rb" style="left:517.50px;top:119px;font-size:12px;transform:scaleX(0.9893);">詳細設定</div>
<div class="t g" style="left:425.00px;top:142px;font-size:12px;">並</div>
<div class="t g" style="left:437.02px;top:142px;font-size:12px;transform:scaleX(0.7096);">べ</div>
<div class="t g" style="left:445.54px;top:142px;font-size:12px;">替</div>
<div class="t g" style="left:457.56px;top:142px;font-size:12px;transform:scaleX(0.7096);">えとフィルター</div>
<div class="t rb" style="left:584.50px;top:106.5px;font-size:12px;">区切</div>
<div class="t rb" style="left:608.52px;top:106.5px;font-size:12px;transform:scaleX(0.6216);">り</div>
<div class="t rb" style="left:615.98px;top:106.5px;font-size:12px;">位置</div>
<div class="t rb" style="left:9.70px;top:179px;font-size:15px;transform:scaleX(0.9423);">B2</div>
<div class="t tt" style="left:381.00px;top:167px;font-size:12px;font-weight:bold;">昇順</div>
<div class="t tt" style="left:380.50px;top:191px;font-size:12px;">小</div>
<div class="t tt" style="left:392.52px;top:191px;font-size:12px;transform:scaleX(0.7900);">さい</div>
<div class="t tt" style="left:411.49px;top:191px;font-size:12px;">順</div>
<div class="t tt" style="left:423.50px;top:191px;font-size:12px;transform:scaleX(0.7900);">に</div>
<div class="t tt" style="left:433.00px;top:191px;font-size:12px;">並</div>
<div class="t tt" style="left:445.01px;top:191px;font-size:12px;transform:scaleX(0.7900);">べ</div>
<div class="t tt" style="left:454.50px;top:191px;font-size:12px;">替</div>
<div class="t tt" style="left:466.52px;top:191px;font-size:12px;transform:scaleX(0.7900);">えます。</div>
<div class="t lnk" style="left:404.00px;top:221px;font-size:12px;font-weight:bold;">詳細情報</div>
<!-- mouse cursor -->
<svg class="abs" style="left:388px;top:97.700px" width="14" height="21" viewBox="0 0 14 21">
 <path d="M.5 .8 V16.200 L4 12.800 L6.700 18.800 L9 17.800 L6.400 12 H11.500 Z" fill="#fff" stroke="#000" stroke-width="1"/>
</svg>
<!-- red annotation rects -->
<div class="abs" style="left:319px;top:31px;width:78px;height:31px;border:1.350px solid #f00"></div>
<div class="abs" style="left:363px;top:63.800px;width:38px;height:42px;border:1.350px solid #f00"></div>

</body></html>
